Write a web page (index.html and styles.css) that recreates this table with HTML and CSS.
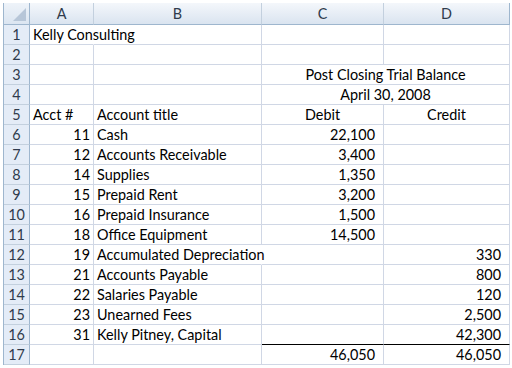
FILE: index.html
```html
<!DOCTYPE html>
<html>
<head>
<meta charset="utf-8">
<link rel="stylesheet" href="styles.css">
</head>
<body>
<div class="sheet">
  <div class="corner"><span class="tri"></span></div>
  <div class="colh">A</div>
  <div class="colh">B</div>
  <div class="colh">C</div>
  <div class="colh last">D</div>

  <div class="rowh">1</div>
  <div class="c no-r">Kelly Consulting</div>
  <div class="c"></div>
  <div class="c"></div>
  <div class="c"></div>

  <div class="rowh">2</div>
  <div class="c"></div>
  <div class="c"></div>
  <div class="c"></div>
  <div class="c"></div>

  <div class="rowh">3</div>
  <div class="c"></div>
  <div class="c"></div>
  <div class="c center span2">Post Closing Trial Balance</div>

  <div class="rowh">4</div>
  <div class="c"></div>
  <div class="c"></div>
  <div class="c center span2">April 30, 2008</div>

  <div class="rowh">5</div>
  <div class="c">Acct #</div>
  <div class="c">Account title</div>
  <div class="c center">Debit</div>
  <div class="c center">Credit</div>

  <div class="rowh">6</div>
  <div class="c num">11</div>
  <div class="c">Cash</div>
  <div class="c amt">22,100</div>
  <div class="c"></div>

  <div class="rowh">7</div>
  <div class="c num">12</div>
  <div class="c">Accounts Receivable</div>
  <div class="c amt">3,400</div>
  <div class="c"></div>

  <div class="rowh">8</div>
  <div class="c num">14</div>
  <div class="c">Supplies</div>
  <div class="c amt">1,350</div>
  <div class="c"></div>

  <div class="rowh">9</div>
  <div class="c num">15</div>
  <div class="c">Prepaid Rent</div>
  <div class="c amt">3,200</div>
  <div class="c"></div>

  <div class="rowh">10</div>
  <div class="c num">16</div>
  <div class="c">Prepaid Insurance</div>
  <div class="c amt">1,500</div>
  <div class="c"></div>

  <div class="rowh">11</div>
  <div class="c num">18</div>
  <div class="c">Office Equipment</div>
  <div class="c amt">14,500</div>
  <div class="c"></div>

  <div class="rowh">12</div>
  <div class="c num">19</div>
  <div class="c no-r">Accumulated Depreciation</div>
  <div class="c"></div>
  <div class="c amt">330</div>

  <div class="rowh">13</div>
  <div class="c num">21</div>
  <div class="c">Accounts Payable</div>
  <div class="c"></div>
  <div class="c amt">800</div>

  <div class="rowh">14</div>
  <div class="c num">22</div>
  <div class="c">Salaries Payable</div>
  <div class="c"></div>
  <div class="c amt">120</div>

  <div class="rowh">15</div>
  <div class="c num">23</div>
  <div class="c">Unearned Fees</div>
  <div class="c"></div>
  <div class="c amt">2,500</div>

  <div class="rowh">16</div>
  <div class="c num">31</div>
  <div class="c">Kelly Pitney, Capital</div>
  <div class="c under"></div>
  <div class="c amt under">42,300</div>

  <div class="rowh">17</div>
  <div class="c"></div>
  <div class="c"></div>
  <div class="c amt">46,050</div>
  <div class="c amt">46,050</div>
</div>
</body>
</html>
```

FILE: styles.css
```css
html, body {
  margin: 0;
  padding: 0;
  background: #ffffff;
}

body {
  padding: 3px 0 0 3px;
  font-family: Lato, "Liberation Sans", sans-serif;
  font-size: 14.4px;
  color: #000000;
}

.sheet {
  display: grid;
  grid-template-columns: 26px 64px 168px 122px 126px;
  grid-template-rows: 22px repeat(17, 20px);
  border-left: 1px solid #9eb6ce;
  width: max-content;
}

.corner {
  position: relative;
  background: linear-gradient(#eef3f9, #dbe5f1);
  border-right: 1px solid #9eb6ce;
  border-bottom: 1px solid #9eb6ce;
}

.tri {
  position: absolute;
  right: 3px;
  bottom: 3px;
  width: 0;
  height: 0;
  border-left: 13px solid transparent;
  border-bottom: 13px solid #b7c6d8;
}

.colh {
  background: linear-gradient(#f4f7fb, #dae4f0);
  border-right: 1px solid #c3d0de;
  border-bottom: 1px solid #9eb6ce;
  text-align: center;
  line-height: 21px;
  color: #2f3b4c;
}

.colh.last {
  border-right: 1px solid #9eb6ce;
}

.rowh {
  background: #e4ecf7;
  border-right: 1px solid #9eb6ce;
  border-bottom: 1px solid #c3d0de;
  text-align: center;
  line-height: 19px;
  color: #2f3b4c;
}

.c {
  border-right: 1px solid #d0d7e5;
  border-bottom: 1px solid #d0d7e5;
  padding: 0 3px;
  line-height: 19px;
  white-space: nowrap;
  overflow: visible;
  min-width: 0;
}

.no-r {
  border-right-color: transparent;
}

.center {
  text-align: center;
}

.span2 {
  grid-column: span 2;
}

.num {
  text-align: right;
}

.amt {
  text-align: right;
  padding-right: 8px;
}

.under {
  border-bottom: 1px solid #000000;
}
```
